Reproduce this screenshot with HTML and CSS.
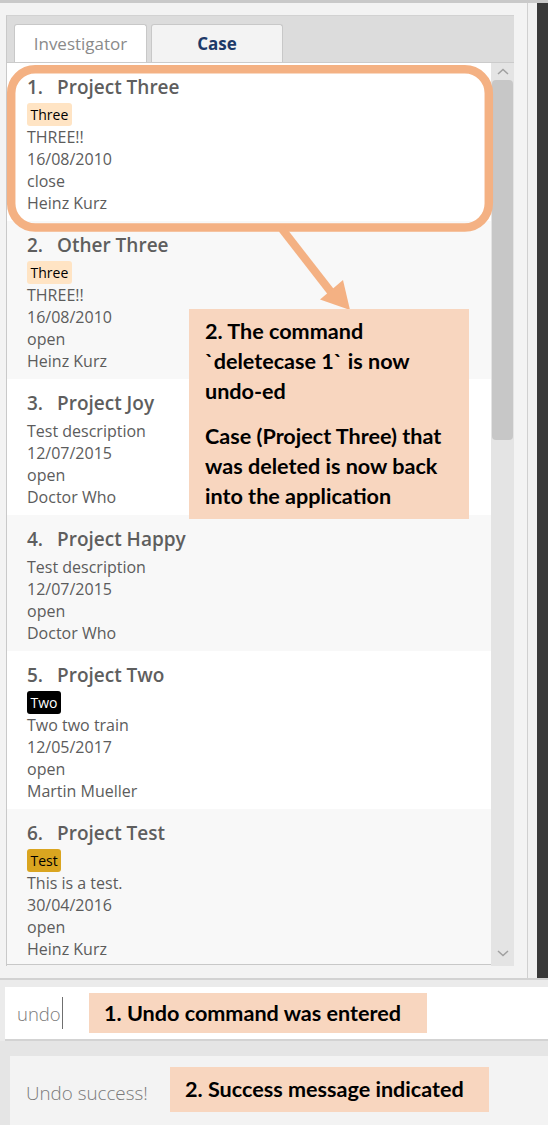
FILE: index.html
```html
<!DOCTYPE html>
<html>
<head>
<meta charset="utf-8">
<link rel="stylesheet" href="styles.css">
</head>
<body>
<div class="app">
  <div class="topline"></div>
  <div class="main">
    <div class="leftpane">
      <div class="tabpane">
        <div class="tabhead">
          <div class="tab tab-inv">Investigator</div>
          <div class="tab tab-case">Case</div>
        </div>
        <div class="tabbody">
          <div class="list">
            <div class="card">
              <div class="title"><span class="id">1.</span><span class="name">Project Three</span></div>
              <div class="tags"><span class="tag tag-three">Three</span></div>
              <div class="field">THREE!!</div>
              <div class="field">16/08/2010</div>
              <div class="field">close</div>
              <div class="field">Heinz Kurz</div>
            </div>
            <div class="card alt">
              <div class="title"><span class="id">2.</span><span class="name">Other Three</span></div>
              <div class="tags"><span class="tag tag-three">Three</span></div>
              <div class="field">THREE!!</div>
              <div class="field">16/08/2010</div>
              <div class="field">open</div>
              <div class="field">Heinz Kurz</div>
            </div>
            <div class="card">
              <div class="title"><span class="id">3.</span><span class="name">Project Joy</span></div>
              <div class="tags"></div>
              <div class="field">Test description</div>
              <div class="field">12/07/2015</div>
              <div class="field">open</div>
              <div class="field">Doctor Who</div>
            </div>
            <div class="card alt">
              <div class="title"><span class="id">4.</span><span class="name">Project Happy</span></div>
              <div class="tags"></div>
              <div class="field">Test description</div>
              <div class="field">12/07/2015</div>
              <div class="field">open</div>
              <div class="field">Doctor Who</div>
            </div>
            <div class="card">
              <div class="title"><span class="id">5.</span><span class="name">Project Two</span></div>
              <div class="tags"><span class="tag tag-two">Two</span></div>
              <div class="field">Two two train</div>
              <div class="field">12/05/2017</div>
              <div class="field">open</div>
              <div class="field">Martin Mueller</div>
            </div>
            <div class="card alt">
              <div class="title"><span class="id">6.</span><span class="name">Project Test</span></div>
              <div class="tags"><span class="tag tag-test">Test</span></div>
              <div class="field">This is a test.</div>
              <div class="field">30/04/2016</div>
              <div class="field">open</div>
              <div class="field">Heinz Kurz</div>
            </div>
          </div>
          <div class="scrollbar">
            <div class="arrow-up"><svg width="12" height="7" viewBox="0 0 12 7"><polyline points="1,6 6,1.5 11,6" fill="none" stroke="#a0a0a0" stroke-width="1.5"/></svg></div>
            <div class="thumb"></div>
            <div class="track"></div>
            <div class="arrow-down"><svg width="12" height="7" viewBox="0 0 12 7"><polyline points="1,1 6,5.5 11,1" fill="none" stroke="#a0a0a0" stroke-width="1.5"/></svg></div>
          </div>
        </div>
      </div>
    </div>
    <div class="vline"></div>
    <div class="gapcol"></div>
    <div class="darkbar"></div>
  </div>
  <div class="sep"></div>
  <div class="cmdarea">
    <div class="cmdbox"><span class="cmdtext">undo</span><span class="caret"></span></div>
  </div>
  <div class="resultarea">
    <div class="resultbox">Undo success!</div>
  </div>
</div>

<svg class="overlay" width="548" height="1125" viewBox="0 0 548 1125">
  <rect x="11.2" y="69.3" width="477.6" height="158.2" rx="24" ry="24" fill="none" stroke="#f4b183" stroke-width="8.5"/>
  <line x1="282" y1="229" x2="331" y2="292" stroke="#f4b183" stroke-width="8"/>
  <polygon points="320,299.5 343,280 350,310" fill="#f4b183"/>
</svg>

<div class="note note-main">
  <p>2. The command<br>`deletecase 1` is now<br>undo-ed</p>
  <p>Case (Project Three) that<br>was deleted is now back<br>into the application</p>
</div>
<div class="note note-cmd">1. Undo command was entered</div>
<div class="note note-result">2. Success message indicated</div>
</body>
</html>
```

FILE: styles.css
```css
html, body {
  margin: 0;
  padding: 0;
}
body {
  width: 548px;
  height: 1125px;
  overflow: hidden;
  background: #f3f3f3;
  font-family: "Open Sans", "Noto Sans", sans-serif;
  position: relative;
}
.app {
  display: flex;
  flex-direction: column;
  width: 548px;
  height: 1125px;
}
.topline {
  height: 3px;
  background: #c9c9c9;
}
.main {
  display: flex;
  height: 975px;
}
.leftpane {
  width: 527px;
  padding: 12px 0 0 6px;
  box-sizing: border-box;
  background: #f3f3f3;
}
.tabpane {
  width: 508px;
  height: 951px;
  display: flex;
  flex-direction: column;
  border-left: 1px solid #c9c9c9;
  border-top: 1px solid #d2d2d2;
  box-sizing: border-box;
}
.tabhead {
  height: 47px;
  box-sizing: border-box;
  background: #dcdcdc;
  border-bottom: 1px solid #cbcbcb;
  display: flex;
  align-items: flex-end;
  gap: 4px;
  padding-left: 7px;
}
.tab {
  height: 38px;
  box-sizing: border-box;
  border: 1px solid #c8c8c8;
  border-bottom: none;
  border-radius: 3px 3px 0 0;
  display: flex;
  align-items: center;
  justify-content: center;
  font-size: 17px;
}
.tab-inv {
  width: 133px;
  background: #ffffff;
  color: #8a8a8a;
}
.tab-case {
  width: 132px;
  background: #f3f3f3;
  color: #1c3968;
  font-weight: 700;
}
.tabbody {
  flex: 1;
  display: flex;
  min-height: 0;
}
.list {
  flex: 1;
  height: 902px;
  box-sizing: border-box;
  border-bottom: 1px solid #c8c8c8;
  background: #ffffff;
  overflow: hidden;
}
.card {
  padding: 10px 20px 7px 20px;
  background: #ffffff;
}
.card.alt {
  background: #f8f8f8;
}
.title {
  height: 28px;
  line-height: 28px;
  font-size: 19px;
  font-weight: 600;
  color: #5e5e5e;
  white-space: nowrap;
  display: flex;
}
.title .id {
  width: 30px;
}
.tags {
  display: flex;
  gap: 4px;
  padding-top: 2px;
}
.tags:empty {
  padding-top: 3px;
}
.tag {
  height: 23px;
  line-height: 23px;
  padding: 0 3.5px;
  font-size: 14px;
  border-radius: 3px;
  color: #000000;
}
.tag-three {
  background: #ffe4c4;
}
.tag-two {
  background: #000000;
  color: #ffffff;
}
.tag-test {
  background: #daa520;
}
.field {
  height: 22px;
  line-height: 22px;
  font-size: 16px;
  color: #5c5c5c;
  white-space: nowrap;
}
.scrollbar {
  width: 23px;
  background: #e4e4e4;
  display: flex;
  flex-direction: column;
  align-items: center;
}
.arrow-up {
  height: 17px;
  display: flex;
  align-items: center;
  justify-content: center;
}
.thumb {
  width: 21px;
  height: 360px;
  background: #c7c7c7;
  border-radius: 4px;
}
.track {
  flex: 1;
}
.arrow-down {
  height: 18px;
  display: flex;
  align-items: center;
  justify-content: center;
  padding-bottom: 4px;
}
.vline {
  width: 1px;
  background: #d0d0d0;
}
.gapcol {
  width: 9px;
  background: #f1f1f1;
}
.darkbar {
  width: 11px;
  background: #393939;
}
.sep {
  height: 2px;
  background: #d2d2d2;
}
.cmdarea {
  background: #ebebeb;
  padding: 7px 0 0 5px;
}
.cmdbox {
  height: 52px;
  background: #ffffff;
  border-bottom: 2px solid #d3d3d3;
  display: flex;
  align-items: center;
  padding-left: 12px;
}
.cmdtext {
  font-size: 18.5px;
  font-weight: 300;
  color: #7a7a7a;
}
.caret {
  width: 1.5px;
  height: 32px;
  background: #6f6f6f;
  margin-left: 1px;
}
.resultarea {
  flex: 1;
  background: #e5e5e5;
  padding: 15px 0 0 10px;
  display: flex;
  flex-direction: column;
}
.resultbox {
  flex: 1;
  background: #f3f3f3;
  padding: 25px 0 0 16px;
  font-size: 18.8px;
  font-weight: 300;
  line-height: 24px;
  color: #7a7a7a;
}
.overlay {
  position: absolute;
  left: 0;
  top: 0;
  pointer-events: none;
}
.note {
  position: absolute;
  background: #f8d6bf;
  color: #000000;
  font-family: Lato, "Open Sans", sans-serif;
  font-weight: 700;
  font-size: 21.6px;
  box-sizing: border-box;
  white-space: nowrap;
}
.note-main {
  left: 189px;
  top: 309px;
  width: 280px;
  height: 210px;
  padding: 7px 0 0 16px;
  line-height: 30px;
}
.note-main p {
  margin: 0 0 15px 0;
}
.note-cmd {
  left: 89px;
  top: 993px;
  width: 338px;
  height: 40px;
  line-height: 40px;
  padding-left: 15px;
}
.note-result {
  left: 170px;
  top: 1067px;
  width: 319px;
  height: 45px;
  line-height: 44px;
  padding-left: 15px;
}
```
